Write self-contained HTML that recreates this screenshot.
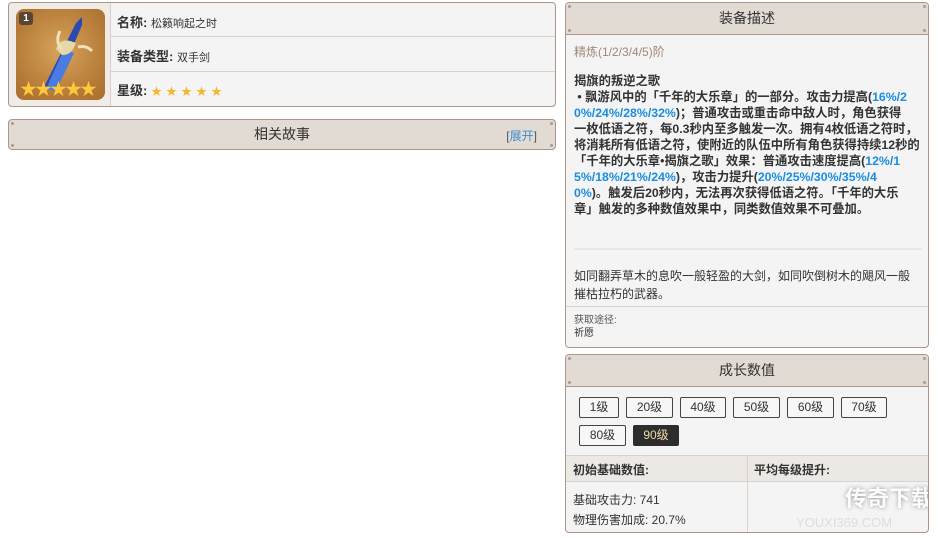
<!DOCTYPE html>
<html><head><meta charset="utf-8"><style>
*{margin:0;padding:0;box-sizing:border-box}
body{width:938px;height:538px;background:#fff;font-family:"Liberation Sans","Noto Sans CJK SC",sans-serif;color:#333;position:relative;overflow:hidden}
.abs{position:absolute;white-space:nowrap}
.card{position:absolute;border:1px solid #b09488;border-radius:4px;background:#f4f4f4;overflow:hidden}
.hdr{background:#e2dbd3;border-bottom:1px solid #b09488;text-align:center;font-size:14px;color:#333;position:relative}
.dot{position:absolute;width:3px;height:3px;border-radius:50%;background:#a99}
.b{color:#1a8ee0}
.btn{position:absolute;height:21px;border:1px solid #444;border-radius:2px;background:#f7f7f7;font-size:12px;text-align:center;line-height:19px;color:#333}
</style></head><body>

<div class="card" style="left:8px;top:2px;width:548px;height:105px;">
  <div class="abs" style="left:0;top:0;width:102px;height:103px;background:#efebe6;border-right:1px solid #d8cfc8"></div>
  <div class="abs" style="left:7px;top:6px;width:89px;height:91px;border-radius:8px;background:radial-gradient(circle at 50% 45%,#d7a45a,#b57a38 70%,#a86e30);overflow:hidden">
    <div class="abs" style="left:3px;top:3px;width:14px;height:13px;background:#5a4535;border-radius:3px;color:#fff;font-size:10px;font-weight:bold;text-align:center;line-height:13px">1</div>
    <svg class="abs" style="left:0;top:0" width="89" height="91">
      <path d="M26 82 L60 14 L66 8 L66 16 L40 78 Z" fill="#2a4ab0"/>
      <path d="M30 80 L48 40 L58 44 L40 82 Z" fill="#4a7be0"/>
      <path d="M40 40 C44 30 50 30 60 34 C56 44 52 46 46 46 Z" fill="#e6d7a8"/>
      <path d="M44 22 C40 30 42 36 46 40" stroke="#efe2b8" stroke-width="3" fill="none"/>
      <path d="M62 38 C70 36 74 40 76 42" stroke="#efe2b8" stroke-width="3" fill="none"/>
    </svg>
    <div class="abs" style="left:4px;top:72px;width:88px;color:#ffc83a;font-size:17px;letter-spacing:-2px;line-height:18px">★★★★★</div>
  </div>
  <div class="abs" style="left:102px;top:33px;right:0;height:1px;background:#ddd2cb"></div>
  <div class="abs" style="left:102px;top:68px;right:0;height:1px;background:#ddd2cb"></div>
  <div class="abs" style="left:108px;top:9px;font-size:13px"><b>名称:</b> <span style="font-size:11px">松籁响起之时</span></div>
  <div class="abs" style="left:108px;top:43px;font-size:13px"><b>装备类型:</b> <span style="font-size:11px">双手剑</span></div>
  <div class="abs" style="left:108px;top:77px;font-size:13px"><b>星级:</b> <span style="color:#f5b530;font-size:11px;letter-spacing:4px">★★★★★</span></div>
</div>

<div class="card" style="left:8px;top:119px;width:548px;height:31px;background:#e2dbd3">
  <div style="text-align:center;font-size:14px;line-height:29px">相关故事</div>
  <div class="abs" style="right:18px;top:7px;font-size:12px;color:#555">[<span style="color:#3a8ed0">展开</span>]</div>
  <div class="dot" style="left:2px;top:2px"></div><div class="dot" style="right:2px;top:2px"></div>
  <div class="dot" style="left:2px;bottom:2px"></div><div class="dot" style="right:2px;bottom:2px"></div>
</div>

<div class="card" style="left:565px;top:2px;width:364px;height:346px;">
  <div class="hdr" style="height:32px;line-height:31px">装备描述
    <div class="dot" style="left:2px;top:2px"></div><div class="dot" style="right:2px;top:2px"></div>
    <div class="dot" style="left:2px;bottom:2px"></div><div class="dot" style="right:2px;bottom:2px"></div>
  </div>
  <div class="abs" style="left:8px;top:40px;font-size:12px;color:#a08878">精炼(1/2/3/4/5)阶</div>
  <div class="abs" style="left:8px;top:70px;font-size:12.3px;font-weight:bold;line-height:16px;color:#333">
    揭旗的叛逆之歌<br>
    &nbsp;• 飘游风中的「千年的大乐章」的一部分。攻击力提高(<span class="b">16%/2</span><br>
    <span class="b">0%/24%/28%/32%</span>)；普通攻击或重击命中敌人时，角色获得<br>
    一枚低语之符，每0.3秒内至多触发一次。拥有4枚低语之符时，<br>
    将消耗所有低语之符，使附近的队伍中所有角色获得持续12秒的<br>
    「千年的大乐章•揭旗之歌」效果：普通攻击速度提高(<span class="b">12%/1</span><br>
    <span class="b">5%/18%/21%/24%</span>)，攻击力提升(<span class="b">20%/25%/30%/35%/4</span><br>
    <span class="b">0%</span>)。触发后20秒内，无法再次获得低语之符。「千年的大乐<br>
    章」触发的多种数值效果中，同类数值效果不可叠加。
  </div>
  <div class="abs" style="left:8px;top:245px;width:348px;height:2px;background:#e6e6e6"></div>
  <div class="abs" style="left:8px;top:264px;font-size:12px;line-height:18px">如同翻弄草木的息吹一般轻盈的大剑，如同吹倒树木的飓风一般<br>摧枯拉朽的武器。</div>
  <div class="abs" style="left:0;top:303px;width:100%;height:1px;background:#ddd2cb"></div>
  <div class="abs" style="left:8px;top:311px;font-size:10px;line-height:13px;color:#555">获取途径:<br><span style="color:#333">祈愿</span></div>
</div>

<div class="card" style="left:565px;top:354px;width:364px;height:179px;">
  <div class="hdr" style="height:32px;line-height:31px">成长数值
    <div class="dot" style="left:2px;top:2px"></div><div class="dot" style="right:2px;top:2px"></div>
    <div class="dot" style="left:2px;bottom:2px"></div><div class="dot" style="right:2px;bottom:2px"></div>
  </div>
  <div class="btn" style="left:13px;top:42px;width:40px">1级</div>
  <div class="btn" style="left:60px;top:42px;width:47px">20级</div>
  <div class="btn" style="left:114px;top:42px;width:46px">40级</div>
  <div class="btn" style="left:167px;top:42px;width:47px">50级</div>
  <div class="btn" style="left:221px;top:42px;width:47px">60级</div>
  <div class="btn" style="left:275px;top:42px;width:46px">70级</div>
  <div class="btn" style="left:13px;top:70px;width:47px">80级</div>
  <div class="btn" style="left:67px;top:70px;width:46px;background:#2d2d2d;border-color:#2d2d2d;color:#f0d9a8">90级</div>
  <div class="abs" style="left:0;top:100px;width:100%;height:27px;background:#ece8e4;border-top:1px solid #ddd2cb;border-bottom:1px solid #ddd2cb"></div>
  <div class="abs" style="left:181px;top:100px;width:1px;height:80px;background:#ddd2cb"></div>
  <div class="abs" style="left:7px;top:106px;font-size:12px;font-weight:bold">初始基础数值:</div>
  <div class="abs" style="left:188px;top:106px;font-size:12px;font-weight:bold">平均每级提升:</div>
  <div class="abs" style="left:7px;top:135px;font-size:12px;line-height:20px">基础攻击力: 741<br>物理伤害加成: 20.7%</div>
  <div class="abs" style="left:279px;top:126px;font-size:22px;font-weight:bold;color:rgba(255,255,255,0.95);text-shadow:0 0 4px #999">传奇下载</div>
  <div class="abs" style="left:230px;top:160px;font-size:13px;color:rgba(200,200,200,0.5)">YOUXI369.COM</div>
</div>
</body></html>
